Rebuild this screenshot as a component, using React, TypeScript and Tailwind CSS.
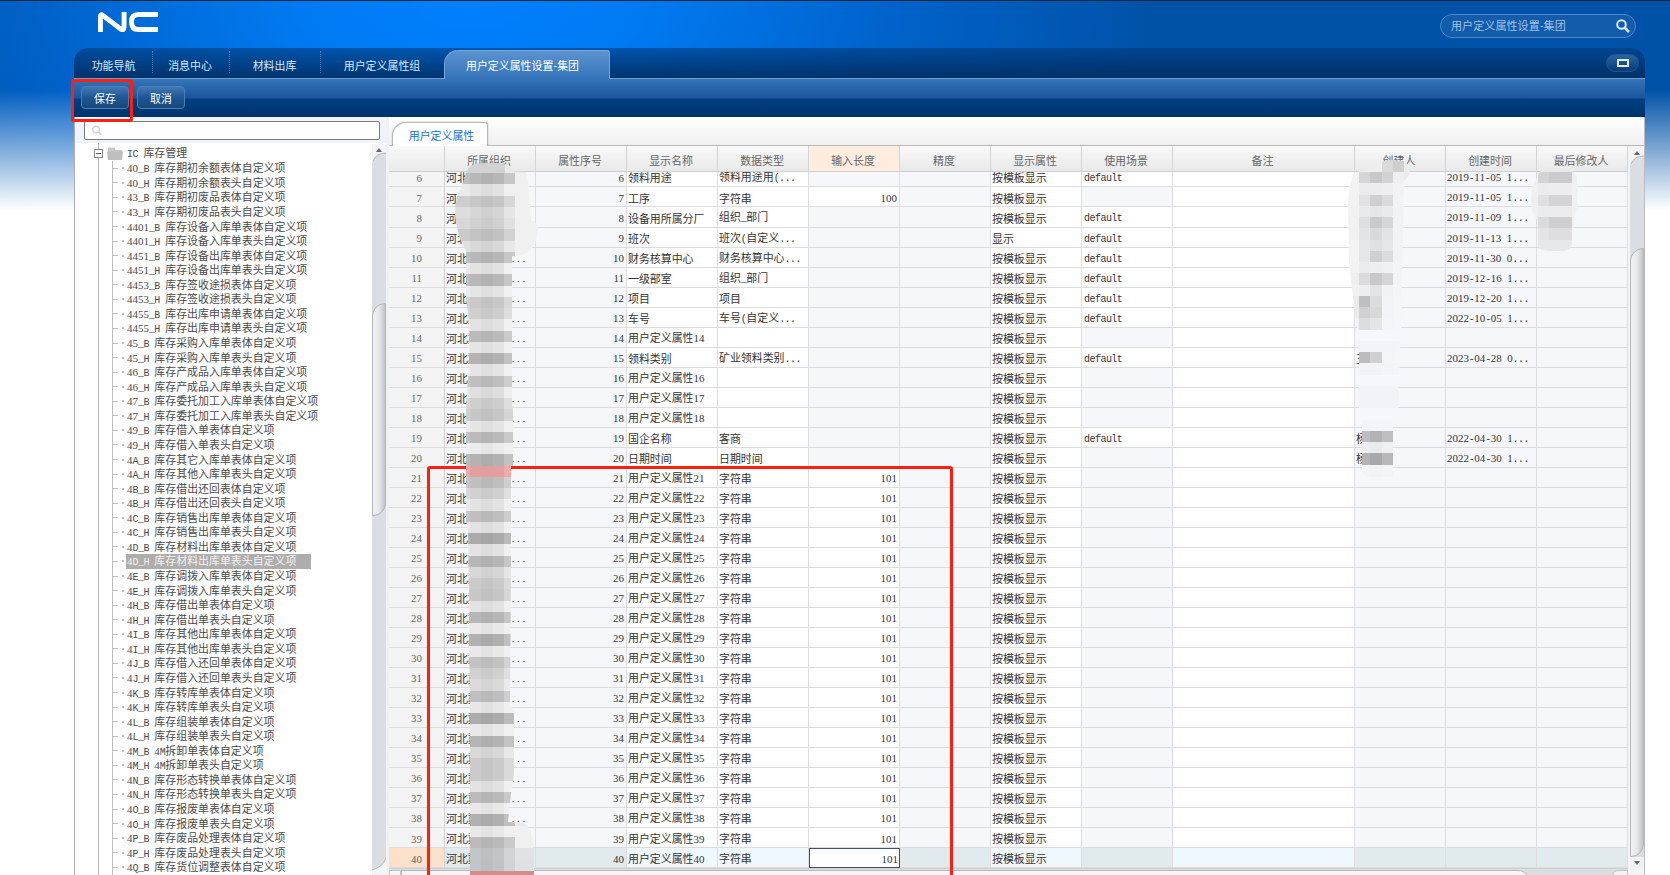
import React from "react";

const SANS = "font-['Noto_Sans_CJK_SC',sans-serif]";

/* Half-width runs take exactly half of a full-width character. */
function T({ children }: { children: string }) {
  const parts = children.match(/[0-9]+|[\x20-\x2f\x3a-\x7e]+|[^\x20-\x7e]+/g) ?? [];
  return (
    <span className="whitespace-pre">
      {parts.map((p, i) =>
        /^[0-9]/.test(p) ? (
          <span key={i} className="font-['Liberation_Serif',serif]">{p}</span>
        ) : /^[\x20-\x7e]/.test(p) ? (
          <span key={i} className="font-['Liberation_Mono',monospace] text-[10px] tracking-[-0.53px]">{p}</span>
        ) : (
          <span key={i}>{p}</span>
        ),
      )}
    </span>
  );
}

const tree = [
  "40_B 库存期初余额表体自定义项", "40_H 库存期初余额表头自定义项",
  "43_B 库存期初废品表体自定义项", "43_H 库存期初废品表头自定义项",
  "4401_B 库存设备入库单表体自定义项", "4401_H 库存设备入库单表头自定义项",
  "4451_B 库存设备出库单表体自定义项", "4451_H 库存设备出库单表头自定义项",
  "4453_B 库存签收途损表体自定义项", "4453_H 库存签收途损表头自定义项",
  "4455_B 库存出库申请单表体自定义项", "4455_H 库存出库申请单表头自定义项",
  "45_B 库存采购入库单表体自定义项", "45_H 库存采购入库单表头自定义项",
  "46_B 库存产成品入库单表体自定义项", "46_H 库存产成品入库单表头自定义项",
  "47_B 库存委托加工入库单表体自定义项", "47_H 库存委托加工入库单表头自定义项",
  "49_B 库存借入单表体自定义项", "49_H 库存借入单表头自定义项",
  "4A_B 库存其它入库单表体自定义项", "4A_H 库存其他入库单表头自定义项",
  "4B_B 库存借出还回表体自定义项", "4B_H 库存借出还回表头自定义项",
  "4C_B 库存销售出库单表体自定义项", "4C_H 库存销售出库单表头自定义项",
  "4D_B 库存材料出库单表体自定义项", "4D_H 库存材料出库单表头自定义项",
  "4E_B 库存调拨入库单表体自定义项", "4E_H 库存调拨入库单表头自定义项",
  "4H_B 库存借出单表体自定义项", "4H_H 库存借出单表头自定义项",
  "4I_B 库存其他出库单表体自定义项", "4I_H 库存其他出库单表头自定义项",
  "4J_B 库存借入还回单表体自定义项", "4J_H 库存借入还回单表头自定义项",
  "4K_B 库存转库单表体自定义项", "4K_H 库存转库单表头自定义项",
  "4L_B 库存组装单表体自定义项", "4L_H 库存组装单表头自定义项",
  "4M_B 4M拆卸单表体自定义项", "4M_H 4M拆卸单表头自定义项",
  "4N_B 库存形态转换单表体自定义项", "4N_H 库存形态转换单表头自定义项",
  "4O_B 库存报废单表体自定义项", "4O_H 库存报废单表头自定义项",
  "4P_B 库存废品处理表体自定义项", "4P_H 库存废品处理表头自定义项",
  "4Q_B 库存货位调整表体自定义项",
];

type Row = { n: number; name: string; type: string; len: string; show: string; scene: string; by: string; at: string };
const mk = (n: number, name: string, type: string, len = "", scene = "", at = "", by = "", show = "按模板显示"): Row =>
  ({ n, name, type, len, show, scene, by, at });

const rows: Row[] = [
  mk(6, "领料用途", "领料用途用(...", "", "default", "2019-11-05 1..."),
  mk(7, "工序", "字符串", "100", "", "2019-11-05 1..."),
  mk(8, "设备用所属分厂", "组织_部门", "", "default", "2019-11-09 1..."),
  mk(9, "班次", "班次(自定义...", "", "default", "2019-11-13 1...", "", "显示"),
  mk(10, "财务核算中心", "财务核算中心...", "", "default", "2019-11-30 0..."),
  mk(11, "一级部室", "组织_部门", "", "default", "2019-12-16 1..."),
  mk(12, "项目", "项目", "", "default", "2019-12-20 1..."),
  mk(13, "车号", "车号(自定义...", "", "default", "2022-10-05 1..."),
  mk(14, "用户定义属性14", ""),
  mk(15, "领料类别", "矿业领料类别...", "", "default", "2023-04-28 0...", "王"),
  mk(16, "用户定义属性16", ""),
  mk(17, "用户定义属性17", ""),
  mk(18, "用户定义属性18", ""),
  mk(19, "国企名称", "客商", "", "default", "2022-04-30 1...", "杨"),
  mk(20, "日期时间", "日期时间", "", "", "2022-04-30 1...", "杨"),
  ...Array.from({ length: 20 }, (_, i) => mk(21 + i, "用户定义属性" + (21 + i), "字符串", "101")),
];

const GRID = "grid grid-cols-[56px_repeat(8,91px)_182px_repeat(3,91px)]";
const heads = ["", "所属组织", "属性序号", "显示名称", "数据类型", "输入长度", "精度", "显示属性", "使用场景", "备注", "创建人", "创建时间", "最后修改人"];

function Cell({ tone, right, children }: { tone: "lock" | "edit" | "selLock" | "selEdit"; right?: boolean; children?: React.ReactNode }) {
  const bg = { lock: "bg-[#f5f7fb]", edit: "bg-white", selLock: "bg-[#e1eaec]", selEdit: "bg-[#eff7ff]" }[tone];
  return (
    <div className={`flex items-center overflow-hidden whitespace-nowrap border-b border-r border-b-[#dcdcdc] border-r-[#dedee0] pt-[2px] ${bg} ${right ? "justify-end pr-[2px]" : "pl-[1px]"}`}>
      {children}
    </div>
  );
}

function GridRow({ r }: { r: Row }) {
  const sel = r.n === 40;
  const lock = sel ? "selLock" : "lock";
  const edit = sel ? "selEdit" : "edit";
  return (
    <div className={`${GRID} h-[20.03px] shrink-0`}>
      <div className={`flex items-center justify-end border-b border-r border-b-[#dcdcdc] border-r-[#d2d2d4] pr-[22px] pt-[2px] text-[#666] ${sel ? "bg-[#fbe0ca]" : "bg-[#f4f4f4]"}`}>
        <T>{String(r.n)}</T>
      </div>
      <Cell tone={lock}>
        <span className="flex w-full"><T>河北冀</T><span className="ml-[33px] tracking-[2.6px] font-['Liberation_Serif',serif]">...</span></span>
      </Cell>
      <Cell tone={lock} right><T>{String(r.n)}</T></Cell>
      <Cell tone={edit}><T>{r.name}</T></Cell>
      <Cell tone={edit}><T>{r.type}</T></Cell>
      {sel ? (
        <div className="flex items-center justify-end border border-[#3b5283] bg-white pr-[1px] pt-[2px]"><T>{r.len}</T></div>
      ) : (
        <Cell tone={r.len ? "edit" : "lock"} right><T>{r.len}</T></Cell>
      )}
      <Cell tone={lock} />
      <Cell tone={edit}><T>{r.show}</T></Cell>
      <Cell tone={r.scene ? "edit" : lock}><span className="pl-[1px]"><T>{r.scene}</T></span></Cell>
      <Cell tone={edit} />
      <Cell tone={lock}><T>{r.by}</T></Cell>
      <Cell tone={lock}><T>{r.at}</T></Cell>
      <Cell tone={lock} />
    </div>
  );
}

const orgShades = [
  0xb5, 0xe0, 0xc4, 0xd3, 0xce, 0xc0, 0xd6, 0xb5, 0xe0, 0xb5, 0xe2, 0xc6, 0xcc, 0xe0, 0xb8, 0xe2, 0xb0, 0xe2, 0xbc, 0xdc, 0xcc,
  0xc4, 0xe2, 0xb8, 0xe8, 0xb0, -1, 0xbc, 0xce, 0xe0, 0xbc, 0xe0, 0xa8, 0xe0, 0xb4, 0xd4, 0xc8, 0xc4, 0xe0, 0xb4, 0xe6, 0xae,
  0xe6, 0xc0, 0xce, 0xd8, 0xbc, 0xe4, 0xa9, 0xe6, 0xb1, 0xd6, 0xc8, 0xc8, 0xe0, 0xb8, 0xe6, 0xae, 0xe6, 0xb8, 0xbf, 0xbe, -2,
];
const orgCols = [
  { x: 452, w: 18, d: 10 }, { x: 470, w: 11, d: 3 }, { x: 481, w: 12, d: -3 }, { x: 493, w: 11, d: 2 }, { x: 504, w: 11, d: 18 }, { x: 515, w: 30, d: 60 },
];
const STEP = 11.25;

function OrgMosaic() {
  return (
    <svg className="pointer-events-none absolute left-0 top-0" width="1670" height="875">
      <clipPath id="org">
        <path d="M466 172q4-9 17-9h14q12 0 14 8l14 1q2 2 3 10l3 38q8 2 6 16q-3 17-20 20h-5v150h1v60h-2v100l-1 140h1l3 8v60l-3 20-3 28 14 1q12 4 12 30v22q-2 9-8 14H474q-4-5-4-15V700l-1-50v-50l-1-70-2-10v-110l3-50v-40l-3-20v-50q-8-10-11-35q0-20 7-28z" />
      </clipPath>
      <g clipPath="url(#org)" shapeRendering="crispEdges">
        <rect x="452" y="160" width="63" height="13" fill="#d2d2d2" />
        <rect x="505" y="160" width="40" height="13" fill="#e9e9e9" />
        {orgShades.map((s, k) =>
          orgCols.map((c) => {
            const v = Math.min(240, s + c.d - (k > 59 && c.d > 20 ? 28 : 0));
            const fill = s === -1 ? (c.d > 9 ? "#f0a9a8" : "#e39f9f") : s === -2 ? "#d68c89" : k > 59 ? `rgb(${v},${v + 4},${v + 6})` : `rgb(${v},${v},${v + 1})`;
            return <rect key={k + "-" + c.x} x={c.x} y={Math.round(173 + k * STEP)} width={c.w} height={12} fill={fill} />;
          }),
        )}
      </g>
    </svg>
  );
}

const creatorShades: (string | null)[][] = [
  ["#f3f3f3", "#d5d5d7", "#c8c8ca", "#d2d2d4", "#efeff1"], ["#f2f2f2", "#ebecee", "#ececee", "#edeef0", "#f2f2f5"],
  ["#f2f2f2", "#e2e2e4", "#cfcfd1", "#dadadc", "#f2f3f5"], ["#f1f1f1", "#e9eaec", "#e5e6e8", "#e9eaec", "#f1f2f5"],
  ["#f2f2f2", "#dfdfe1", "#cacacc", "#d6d6d8", "#f1f2f4"], ["#f1f1f1", "#e3e4e6", "#d9dadc", "#e3e4e6", "#f2f3f6"],
  ["#f3f3f4", "#e5e6e8", "#e0e1e3", "#e6e7e9", "#f2f3f6"], ["#f3f3f3", "#e6e6e8", "#d0d0d2", "#dcdcde", "#f2f3f6"],
  ["#f2f2f2", "#ebecee", "#edeef0", "#eff0f2", "#f3f4f8"], ["#efefef", "#dbdbdd", "#c9c9cc", "#d5d5d8", "#f2f3f6"],
  ["#f2f2f2", "#eceef0", "#e3e4e6", "#f1f2f4", "#f4f5f9"], ["#ebebeb", "#bfbfc1", "#dcdcde", "#f3f4f8", "#f4f6fa"],
  ["#ebebec", "#d0d0d2", "#d8d8da", "#f3f4f8", "#f4f6fa"], ["#f2f2f3", "#dcdde0", "#e4e5e8", "#f4f5f9", "#f4f6fa"],
  ["#f5f7fc", "#f5f7fc", "#f5f7fc", "#f5f7fc", "#f5f7fc"], ["#f3f4f7", "#f2f4f8", "#f2f4f8", "#f2f4f8", "#f4f5f9"],
  [null, "#bcbcbe", "#d0d0d2", "#f3f5f9", "#f4f6fa"], [null, "#f2f3f7", "#f2f3f7", "#f3f4f8", "#f4f5f9"],
  [null, "#f5f7fc", "#f5f7fc", "#f5f7fc", "#f5f7fc"], [null, "#f1f3f7", "#f1f3f7", "#f1f3f7", "#f1f3f7"],
  [null, "#f1f3f7", "#f1f3f7", "#f1f3f7", "#f1f3f7"], [null, "#f5f7fc", "#f5f7fc", "#f5f7fc", "#f5f7fc"],
  [null, "#f3f5f9", "#f3f5f9", "#f3f5f9", null], [null, "#bdbdbf", "#b3b3b5", "#bebec0", null],
  [null, "#ededf0", "#e9eaec", "#eeeff1", null], [null, "#b4b4b6", "#a8a8aa", "#b8b8ba", null],
  [null, "#f3f4f6", "#f2f3f5", "#f3f4f6", null],
];
const creatorCols = [[1347, 12], [1359, 11], [1370, 12], [1382, 11], [1393, 11]];
const editorShades = [
  ["#f0f0f1", "#d3d3d5", "#cbcbcd", "#eff0f2"], ["#f0f0f1", "#ececee", "#ededef", "#f0f1f4"], ["#efeff0", "#e0e0e2", "#d4d4d6", "#f0f1f4"],
  ["#f0f0f1", "#ebecee", "#ececef", "#f0f1f4"], ["#f0f0f1", "#dbdbdd", "#cfcfd1", "#f0f1f4"], ["#f5f7fb", "#e4e4e6", "#dedee0", "#f5f7fb"],
  ["#f5f7fb", "#e7e8ea", "#e7e8ea", "#f5f7fb"],
];
const editorCols = [[1531, 7], [1538, 11], [1549, 23], [1572, 5]];

function PeopleMosaic() {
  return (
    <svg className="pointer-events-none absolute left-0 top-0" width="1670" height="875">
      <clipPath id="creator"><path d="M1354 174q6-4 14-4l10-3q4-7 12-7l14 1q7 5 5 13-2 5-5 7l-1 50-2 90-3 100-5 40v16h-26q-8-4-5-12V440l-4-8v-100q-6-40-9-70l-1-60q1-20 6-28z" /></clipPath>
      <g clipPath="url(#creator)" shapeRendering="crispEdges">
        <rect x="1347" y="158" width="35" height="14" fill="#efefef" />
        <rect x="1382" y="158" width="11" height="14" fill="#dadada" />
        <rect x="1393" y="158" width="11" height="14" fill="#cfcfcf" />
        <rect x="1404" y="158" width="8" height="26" fill="#ebebec" />
        {creatorShades.map((r, k) => r.map((f, c) => f && (
          <rect key={k + "-" + c} x={creatorCols[c][0] + (k > 21 && c === 1 ? 3 : 0)} y={Math.round(172 + k * STEP)} width={creatorCols[c][1] - (k > 21 && c === 1 ? 3 : 0)} height={12} fill={f} />
        )))}
      </g>
      <clipPath id="editor"><path d="M1540 172q6-6 14-4l12 2q10 0 11 8v30l-3 12v20q-3 10-10 11h-16q-12-1-11-8l1-22-5-8q-4-16 0-28z" /></clipPath>
      <g clipPath="url(#editor)" shapeRendering="crispEdges">
        <rect x="1531" y="166" width="46" height="7" fill="#e9e9e9" />
        {editorShades.map((r, k) => r.map((f, c) => <rect key={k + "-" + c} x={editorCols[c][0]} y={Math.round(172 + k * STEP)} width={editorCols[c][1]} height={12} fill={f} />))}
      </g>
    </svg>
  );
}

function NavItem({ className, children }: { className: string; children: string }) {
  return <div className={`flex items-center justify-center pt-[5px] ${className}`}>{children}</div>;
}
function Divider() {
  return <div className="mt-[3px] h-[22px] border-l border-dotted border-[#3c78b8]" />;
}
function ToolButton({ children }: { children: string }) {
  return (
    <div className="flex h-[23px] w-[48px] items-center justify-center rounded-[4px] border border-[#4b7fb4] bg-linear-to-b from-[#4379b3] via-[#1d5796] via-50% to-[#174778] pt-[1px] text-white">
      {children}
    </div>
  );
}

function Arrow({ up }: { up?: boolean }) {
  return (
    <svg width="14" height="17" className="block shrink-0">
      <rect width="14" height="17" fill="#dadee3" />
      {up ? (
        <>
          <path d="M0 0h14v9Q4 9 1 17H0z" fill="#f3f4f5" />
          <path d="M14 9Q4 9 1 17" fill="none" stroke="#b4b7bc" />
          <path d="M4 8h6l-3-4z" fill="#666" />
        </>
      ) : (
        <>
          <path d="M0 17h14V0Q11 9 0 12z" fill="#f3f4f5" />
          <path d="M14 0Q11 9 0 12" fill="none" stroke="#b4b7bc" />
        </>
      )}
    </svg>
  );
}

const THUMB = "shrink-0 rounded-tl-[13px] rounded-br-[13px] border border-[#b1b4ba] bg-linear-to-r from-[#f2f3f4] via-[#e6e7e9] to-[#c3c5c9]";

export default function App() {
  return (
    <div className={`relative flex h-[875px] w-[1670px] flex-col overflow-hidden bg-white text-[10.93px] leading-none ${SANS}`}>
      <div className="pointer-events-none absolute inset-x-0 top-0 h-[210px] border-t border-[#1c2733] bg-[radial-gradient(ellipse_680px_340px_at_470px_0px,#0080ff_0%,#007af2_25%,#0061c8_65%,#0052a8_100%)]" />
      <div className="pointer-events-none absolute inset-x-0 top-[90px] h-[120px] bg-linear-to-b from-white/0 via-white/50 to-white" />

      <header className="relative flex h-[48px] shrink-0 justify-between pl-[98px] pr-[34px]">
        <svg width="60" height="20" viewBox="0 0 61 20" preserveAspectRatio="none" className="mt-[12px]" fill="none" stroke="#fff">
          <path d="M2.5 20V4.5Q2.5 1.5 5 3.5L23 17Q26.500 19 26.500 15V0" strokeWidth="5" />
          <path d="M61 2.500H41Q34 2.500 34 10T41 17.500H61" strokeWidth="5" />
        </svg>
        <div className="mt-[14px] flex h-[24px] w-[196px] items-center justify-between rounded-full border border-[#4b88c6] bg-[#135bab] pl-[10px] pr-[5px] text-[11.1px] text-[#9fc2e6]">
          <span>用户定义属性设置-集团</span>
          <svg width="14" height="14" fill="none" stroke="#dcebfa"><circle cx="5.500" cy="5.500" r="4.300" strokeWidth="2" /><path d="M8.500 8.500l4.500 4.500" strokeWidth="2.600" /></svg>
        </div>
      </header>

      <div className="relative ml-[74px] flex w-[1571px] grow flex-col">
        <nav className="flex h-[30px] shrink-0 rounded-t-[14px] bg-linear-to-b from-[#003c80]/60 to-[#002d60]/90 text-[#dbe8f6]">
          <NavItem className="w-[78px] pl-px">功能导航</NavItem><Divider />
          <NavItem className="w-[76px] pr-[2px]">消息中心</NavItem><Divider />
          <NavItem className="w-[90px] pr-px">材料出库</NavItem><Divider />
          <NavItem className="w-[123px] pr-px">用户定义属性组</NavItem>
          <div className="z-10 mb-[-1px] mt-[2px] flex w-[166px] items-center justify-center rounded-tl-[14px] rounded-tr-[3px] border-x border-t border-[#76a5d8] bg-linear-to-b from-[#5b93d0] to-[#3574b9] pr-[9px] text-white">用户定义属性设置-集团</div>
          <div className="ml-auto mr-[6px] mt-[6px] flex h-[18px] w-[33px] items-center justify-center rounded-full border border-[#1c5795] bg-linear-to-b from-[#2a649f] to-[#053c78]">
            <div className="h-[8px] w-[12px] border-2 border-[#e2edf8]" />
          </div>
        </nav>
        <div className="flex h-[39px] shrink-0 gap-[8px] border-t border-t-[#6f9fd0] bg-[linear-gradient(to_bottom,#3575b9_0px,#1a559b_19px,#003f84_20px,#00336b_38px)] pl-[7px] pt-[7px]">
          <ToolButton>保存</ToolButton>
          <ToolButton>取消</ToolButton>
        </div>

        <div className="flex h-[758px] shrink-0">
          <aside className="flex w-[312px] shrink-0 flex-col border-l border-[#a9abb0] bg-white text-[#4a4a4a]">
            <div className="h-[26px] shrink-0 bg-[#f0f3f9] pl-[9px] pt-[4px]">
              <div className="flex h-[19px] w-[296px] items-center rounded-[2px] border border-[#7c7c7c] bg-white pl-[7px]">
                <svg width="10" height="11" fill="none" stroke="#cfcfcf"><circle cx="4" cy="4.500" r="3.300" strokeWidth="1.300" /><path d="M6.500 7l3 3" strokeWidth="1.600" /></svg>
              </div>
            </div>
            <div className="flex grow">
              <div className="flex grow">
                <div className="ml-[23px] w-px bg-[#b5b5b5]" />
                <div className="flex flex-col">
                  <div className="ml-[-5px] flex h-[18px] items-center pt-[2px]">
                    <svg width="9" height="9"><rect x=".5" y=".5" width="8" height="8" fill="#fff" stroke="#858585" /><path d="M2 4.500h5" stroke="#555" /></svg>
                    <svg width="16" height="13" className="ml-[4px] mr-[4px]"><path d="M1 3V1.500Q1 .5 2 .5h5q1 0 1 1V3h7v10H1z" fill="#c9c9c9" /><path d="M0 4.500h16L15 13H1z" fill="#bebebe" /></svg>
                    <T>IC 库存管理</T>
                  </div>
                  <div className="ml-[13px] flex flex-col border-l border-[#bdbdbd]">
                    {tree.map((t) => {
                      const sel = t.startsWith("4D_H");
                      return (
                        <div key={t} className="flex h-[14.57px] items-center whitespace-nowrap">
                          <span className="h-px w-[5px] bg-[#c2c2c2]" />
                          <span className="ml-[4px] mr-[2px] size-[2px] bg-[#bdbdbd]" />
                          <span className={sel ? "flex h-full w-[185px] items-center bg-[#aeadac] pl-[1px] pt-[1px] text-[#f2f2f2]" : "pl-[1px] pt-[1px]"}><T>{t}</T></span>
                        </div>
                      );
                    })}
                  </div>
                </div>
              </div>
              <div className="mt-[1px] flex w-[14px] shrink-0 flex-col bg-[#dadee3]">
                <Arrow up />
                <div className="h-[142px] shrink-0" />
                <div className={`h-[213px] ${THUMB}`} />
                <div className="mt-auto" />
                <Arrow />
              </div>
            </div>
          </aside>
          <div className="w-[3px] shrink-0 bg-[#f0f1f3]" />

          <main className="flex w-[1256px] shrink-0 flex-col border-r border-r-[#b9bcc2] bg-[#f3f4f6]">
            <div className="flex h-[29px] shrink-0 items-end border-b border-[#b9b9b9] bg-linear-to-b from-white to-[#f0f0f0] pl-[3px]">
              <div className="mb-[-1px] flex h-[24px] w-[96px] items-center justify-center rounded-tl-[14px] rounded-tr-[3px] border-x border-t border-[#b5b5b5] bg-white pl-[3px] pt-[2px] text-[#1673c8] shadow-[0_0_2px_#bbb]">用户定义属性</div>
            </div>
            <div className="flex h-[729px]">
              <div className="flex w-[1239px] shrink-0 flex-col overflow-hidden text-[#333]">
                <div className={`${GRID} h-[26px] shrink-0 border-b border-[#cfcfcf] text-[#666]`}>
                  {heads.map((h, i) => (
                    <div key={i} className={`flex items-center justify-center border-r border-[#d4d4d4] pr-[2px] pt-[3px] ${i === 5 ? "bg-[#feeddf]" : "bg-linear-to-b from-[#f9f9f9] to-[#e9e9e9]"}`}>{h}</div>
                  ))}
                </div>
                <div className="flex h-[697px] shrink-0 flex-col justify-end overflow-hidden border-b border-[#cfcfcf]">
                  {rows.map((r) => <GridRow key={r.n} r={r} />)}
                </div>
                <div className="flex h-[6px] items-start bg-[#dadee3]">
                  <div className="mt-[1px] h-[6px] w-[12px] border border-[#c4c6ca] bg-[#f6f6f6]" />
                  <div className="mt-[1px] h-[12px] w-[1129px] rounded-tr-[12px] border border-[#b7babf] bg-[#f5f5f6]" />
                  <div className="ml-auto mt-[1px] h-[6px] w-[16px] rounded-tl-[6px] border border-[#c4c6ca] bg-[#f3f3f4]" />
                </div>
              </div>
              <div className="ml-[2px] mt-[1px] flex h-[722px] w-[14px] flex-col bg-[#dadee3]">
                <Arrow up />
                <div className="h-[84px] shrink-0" />
                <div className={`h-[609px] ${THUMB}`} />
                <svg width="14" height="12" className="block"><rect width="14" height="12" fill="#f1f2f4" /><path d="M4 4h6l-3 4z" fill="#666" /></svg>
              </div>
            </div>
          </main>
        </div>
      </div>

      <div className="pointer-events-none absolute left-[427px] top-[466px] h-[420px] w-[526px] rounded-[3px] border-3 border-[#ff1f10]" />
      <OrgMosaic />
      <PeopleMosaic />
      <div className="pointer-events-none absolute left-[71px] top-[79px] h-[43px] w-[62px] rounded-[3px] border-3 border-[#ff1f10]" />
    </div>
  );
}
